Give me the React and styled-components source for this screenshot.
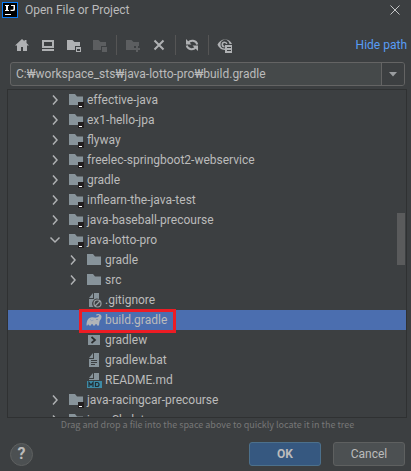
import React, { useState } from "react";
import styled, { createGlobalStyle, css } from "styled-components";

const Global = createGlobalStyle`
  *, *::before, *::after { box-sizing: border-box; }
  html, body, #root { height: 100%; }
  body {
    margin: 0;
    background: #3c3f41;
    color: #bbbbbb;
    font-family: Roboto, "Noto Sans CJK KR", sans-serif;
    font-size: 12px;
    line-height: 20px;
  }
  button, input { font: inherit; color: inherit; }
`;

const Dialog = styled.main`
  display: flex;
  flex-direction: column;
  height: 100vh;
  min-width: 320px;
  overflow: hidden;
  background: #3c3f41;
`;

const TitleBar = styled.header`
  display: flex;
  align-items: center;
  gap: 7px;
  height: 20px;
  padding: 0 11px 0 2px;
  flex: none;
`;

const Title = styled.h1`
  flex: 1;
  margin: 0;
  font-size: 12px;
  font-weight: 400;
  line-height: 20px;
`;

const PlainButton = styled.button`
  display: flex;
  align-items: center;
  justify-content: center;
  padding: 0;
  border: 0;
  background: none;
`;

const Toolbar = styled.div`
  display: flex;
  align-items: center;
  height: 26px;
  margin-top: 12px;
  padding: 0 4px 0 9px;
  flex: none;
`;

const ToolButton = styled(PlainButton)`
  width: 26px;
  height: 26px;
  color: #afb1b3;
  &:disabled { color: #5c5e60; }
`;

const Divider = styled.span`
  width: 1px;
  height: 20px;
  margin: 0 3px;
  background: #555555;
`;

const HideLink = styled.a`
  margin-left: auto;
  color: #589df6;
  text-decoration: none;
`;

const PathField = styled.div`
  display: flex;
  flex: none;
  height: 24px;
  margin: 4px 6px 0 10px;
  border: 1px solid #646464;
  border-radius: 3px;
  background: #45494a;
`;

const PathInput = styled.input`
  flex: 1;
  min-width: 0;
  padding: 0 5px;
  border: 0;
  outline: 0;
  background: none;
`;

const DropButton = styled(PlainButton)`
  width: 23px;
  border-left: 1px solid #646464;
  background: #3c3f41;
  color: #9a9da0;
  border-radius: 0 2px 2px 0;
`;

const TreePanel = styled.section`
  display: flex;
  flex: 1;
  min-height: 0;
  margin: 3px 4px 0 7px;
  border: 1px solid #2f3132;
  overflow: hidden;
  position: relative;
`;

const Tree = styled.ul`
  flex: 1;
  margin: 0;
  padding: 0;
  list-style: none;
`;

const Row = styled.li`
  display: flex;
  align-items: center;
  height: 20px;
  padding-left: ${(p) => 38 + p.$depth * 18}px;
  white-space: nowrap;
  ${(p) => p.$selected && css`background: #4b6eaf;`}
`;

const Toggle = styled.span`
  display: flex;
  justify-content: center;
  width: 18px;
  margin-right: 4px;
`;

const Entry = styled.span`
  display: flex;
  align-items: center;
  gap: 3px;
  position: relative;
`;

const Marker = styled.span`
  position: absolute;
  inset: -1px -9px -3px -7px;
  border: 3px solid #ed1c24;
`;

const Thumb = styled.span`
  position: absolute;
  top: 123px;
  right: 1px;
  width: 8px;
  height: 52px;
  background: #5a5b5c;
`;

const Hint = styled.p`
  flex: none;
  margin: 0;
  padding-left: 4px;
  font-family: "Noto Sans CJK KR", sans-serif;
  font-size: 9px;
  line-height: 14px;
  text-align: center;
  white-space: nowrap;
  color: #777777;
`;

const Footer = styled.footer`
  display: flex;
  align-items: center;
  gap: 12px;
  flex: none;
  padding: 10px 6px 5px 10px;
`;

const HelpButton = styled(PlainButton)`
  width: 23px;
  height: 23px;
  margin-right: auto;
  border: 1px solid #5e6060;
  border-radius: 50%;
  background: #4c5052;
  font-size: 16px;
  font-weight: 700;
  line-height: 20px;
`;

const ActionButton = styled(PlainButton)`
  width: 72px;
  height: 24px;
  border: 1px solid ${(p) => (p.$primary ? "#4c708c" : "#5e6060")};
  border-radius: 3px;
  background: ${(p) => (p.$primary ? "#365880" : "#4c5052")};
  font-weight: ${(p) => (p.$primary ? 700 : 400)};
`;

const Svg = ({ children, size = 16 }) => (
  <svg width={size} height={size} viewBox={`0 0 ${size} ${size}`} fill="currentColor" aria-hidden="true">
    {children}
  </svg>
);

const AppLogo = () => (
  <Svg>
    <rect width="16" height="16" fill="#087cfa" />
    <rect x="1" y="1" width="14" height="14" fill="#000" />
    <path d="M3 3h4v1H6v4h1v1H3V8h1V4H3zM9 3h4v4.500q0 1.500-2 1.500H8.500V7.800H10.500q1 0 1-1V4H9zM3 12h6v1H3z" fill="#fff" />
  </Svg>
);

const folder = "M1 3h5.500l2 2H14v4H9v4H1z";

const HomeIcon = () => (
  <Svg><path d="M8 2 1 8.500h2V14h4v-4h2v4h4V8.500h2L12.500 6V3h-2v1.300z" /></Svg>
);
const DesktopIcon = () => (
  <Svg><path fillRule="evenodd" d="M2 3h12v8H2zM4 5v4h8V5zM2 12h12v2H2z" /></Svg>
);
const ProjectIcon = () => (
  <Svg><path d={folder} /><path fillRule="evenodd" d="M10 10h5v5h-5zM11 12v2h3v-2z" /></Svg>
);
const ModuleIcon = () => (
  <Svg><path d={folder} /><path d="M10 10h5v5h-5z" /></Svg>
);
const NewFolderIcon = () => (
  <Svg><path d={folder} /><path d="M11 9h2v2h2v2h-2v2h-2v-2H9v-2h2z" /></Svg>
);
const DeleteIcon = () => (
  <Svg><path d="m3.500 3.500 9 9m0-9-9 9" stroke="currentColor" strokeWidth="2" /></Svg>
);
const RefreshIcon = () => (
  <Svg>
    <path d="M4 6.500a5 5 0 0 1 9.300 1M12 9.500a5 5 0 0 1-9.300-1" fill="none" stroke="currentColor" strokeWidth="2" />
    <path d="M2 2v5.500h5.500zM14 14V8.500H8.500z" />
  </Svg>
);
const ShowHiddenIcon = () => (
  <Svg>
    <path d="M8 13c-4 0-6.500-3-7.500-5.500C2 4.500 4.500 2.500 8 2.500s6 2 7 4.500h-2.500a4.500 4.500 0 0 0-9 .5c0 2.500 1.500 4 4.500 4z" />
    <path d="M7.500 4.500a3 3 0 0 1 3 2.500H9a1.500 1.500 0 1 0-1.500 2v1.500a3 3 0 0 1 0-6z" />
    <path fillRule="evenodd" d="M8 8h7v8H8zM10 10v1h4v-1zM10 13v1h4v-1z" />
  </Svg>
);
const CloseIcon = () => (
  <Svg size={10}><path d="m.5.5 9 9m0-9-9 9" stroke="#c4c6c8" strokeWidth="1" /></Svg>
);
const CaretIcon = () => (
  <Svg size={8}><path d="M0 2h8L4 6.500z" /></Svg>
);
const Chevron = ({ open }) => (
  <Svg size={12}>
    <path d={open ? "m1.500 3.500 4.500 4.500 4.500-4.500" : "m4 1.500 4 4.500-4 4.500"} fill="none" stroke="#afb1b3" strokeWidth="1.500" />
  </Svg>
);

const kindIcons = {
  project: (
    <>
      <path d="M1 2h6l2 2.500h6V13H1z" fill="#87939a" />
      <path d="M10 10h6v6h-6z" fill="#231f20" />
      <path d="M11 14h3v1h-3z" fill="#fff" />
    </>
  ),
  folder: <path d="M1 2h6l2 2.500h6V13H1z" fill="#87939a" />,
  ignore: (
    <>
      <path d="M7 1v5H3zM8 1h5v6a5 5 0 0 0-5.500 8H3V7h5z" fill="#87939a" />
      <circle cx="11.500" cy="11.500" r="3.500" fill="none" stroke="#9aa0a4" strokeWidth="1.200" />
      <path d="m9 14 5-5" stroke="#9aa0a4" strokeWidth="1.200" />
    </>
  ),
  gradle: (
    <>
      <path
        d="M.5 13.500C.5 9 2 6 5 5.500c2.500-.5 4 .5 5.500 0C12 5 13 4.500 13 3.700c0-1-1.500-1-2 0l-1-.7C11 1.500 15 1.500 15.500 4.500c.3 2.500-2 3.500-2 5-.2 1.500-.5 2.500-.5 4h-2c0-2-1.700-2-2 0H7c0-2-1.800-2-2 0H3c0-1.500-1.300-1.500-1.500 0z"
        fill="#b0b4b8"
      />
      <path d="M4 7q1 3 3.500 1" fill="none" stroke="#8193b6" strokeWidth=".7" />
      <circle cx="11" cy="7.500" r=".6" fill="#4b6eaf" />
    </>
  ),
  shell: (
    <>
      <path d="M2 3h12v10H2z" fill="#87939a" />
      <path d="m5.500 5 3.500 3-3.500 3" fill="none" stroke="#2b2d2e" strokeWidth="1.700" />
    </>
  ),
  text: (
    <path fillRule="evenodd" d="M7 1v5H3zM8 1h5v14H3V7h5zM5 8v1h6V8zM5 10v1h6v-1zM5 12v1h4v-1z" fill="#87939a" />
  ),
  markdown: (
    <>
      <path d="M7 1v5H3zM8 1h5v7H3V7h5z" fill="#87939a" />
      <path d="M1 9h15v7H1z" fill="#3d8aa6" />
      <path d="M3 15v-4.500l2 2.500 2-2.500V15M9.500 10.500v4h1.500q2 0 2-2t-2-2z" fill="none" stroke="#222d33" strokeWidth="1.200" />
    </>
  ),
};

const items = [
  { name: "effective-java", kind: "project", depth: 0, branch: true },
  { name: "ex1-hello-jpa", kind: "project", depth: 0, branch: true },
  { name: "flyway", kind: "project", depth: 0, branch: true },
  { name: "freelec-springboot2-webservice", kind: "project", depth: 0, branch: true },
  { name: "gradle", kind: "project", depth: 0, branch: true },
  { name: "inflearn-the-java-test", kind: "project", depth: 0, branch: true },
  { name: "java-baseball-precourse", kind: "project", depth: 0, branch: true },
  { name: "java-lotto-pro", kind: "project", depth: 0, branch: true, open: true },
  { name: "gradle", kind: "folder", depth: 1, branch: true },
  { name: "src", kind: "folder", depth: 1, branch: true },
  { name: ".gitignore", kind: "ignore", depth: 1 },
  { name: "build.gradle", kind: "gradle", depth: 1, selected: true },
  { name: "gradlew", kind: "shell", depth: 1 },
  { name: "gradlew.bat", kind: "text", depth: 1 },
  { name: "README.md", kind: "markdown", depth: 1 },
  { name: "java-racingcar-precourse", kind: "project", depth: 0, branch: true },
  { name: "java-Skeleton", kind: "project", depth: 0, branch: true },
];

const tools = [
  { label: "Home", Icon: HomeIcon },
  { label: "Desktop", Icon: DesktopIcon },
  { label: "Project directory", Icon: ProjectIcon },
  { label: "Module directory", Icon: ModuleIcon, disabled: true },
  null,
  { label: "New folder", Icon: NewFolderIcon, disabled: true },
  { label: "Delete", Icon: DeleteIcon },
  null,
  { label: "Refresh", Icon: RefreshIcon },
  null,
  { label: "Show hidden files", Icon: ShowHiddenIcon },
];

export default function App() {
  const [path, setPath] = useState("C:₩workspace_sts₩java-lotto-pro₩build.gradle");
  return (
    <>
      <Global />
      <Dialog>
        <TitleBar>
          <AppLogo />
          <Title>Open File or Project</Title>
          <PlainButton aria-label="Close"><CloseIcon /></PlainButton>
        </TitleBar>
        <Toolbar>
          {tools.map((tool, i) =>
            tool ? (
              <ToolButton key={i} aria-label={tool.label} disabled={tool.disabled}><tool.Icon /></ToolButton>
            ) : (
              <Divider key={i} />
            )
          )}
          <HideLink href="#path">Hide path</HideLink>
        </Toolbar>
        <PathField>
          <PathInput id="path" aria-label="Path" value={path} onChange={(e) => setPath(e.target.value)} />
          <DropButton aria-label="Recent paths"><CaretIcon /></DropButton>
        </PathField>
        <TreePanel>
          <Tree role="tree">
            {items.map((item, i) => (
              <Row key={i} role="treeitem" aria-selected={!!item.selected} $depth={item.depth} $selected={item.selected}>
                <Toggle>{item.branch && <Chevron open={item.open} />}</Toggle>
                <Entry>
                  <Svg>{kindIcons[item.kind]}</Svg>
                  {item.name}
                  {item.selected && <Marker />}
                </Entry>
              </Row>
            ))}
          </Tree>
          <Thumb />
        </TreePanel>
        <Hint>Drag and drop a file into the space above to quickly locate it in the tree</Hint>
        <Footer>
          <HelpButton aria-label="Help">?</HelpButton>
          <ActionButton $primary>OK</ActionButton>
          <ActionButton>Cancel</ActionButton>
        </Footer>
      </Dialog>
    </>
  );
}
